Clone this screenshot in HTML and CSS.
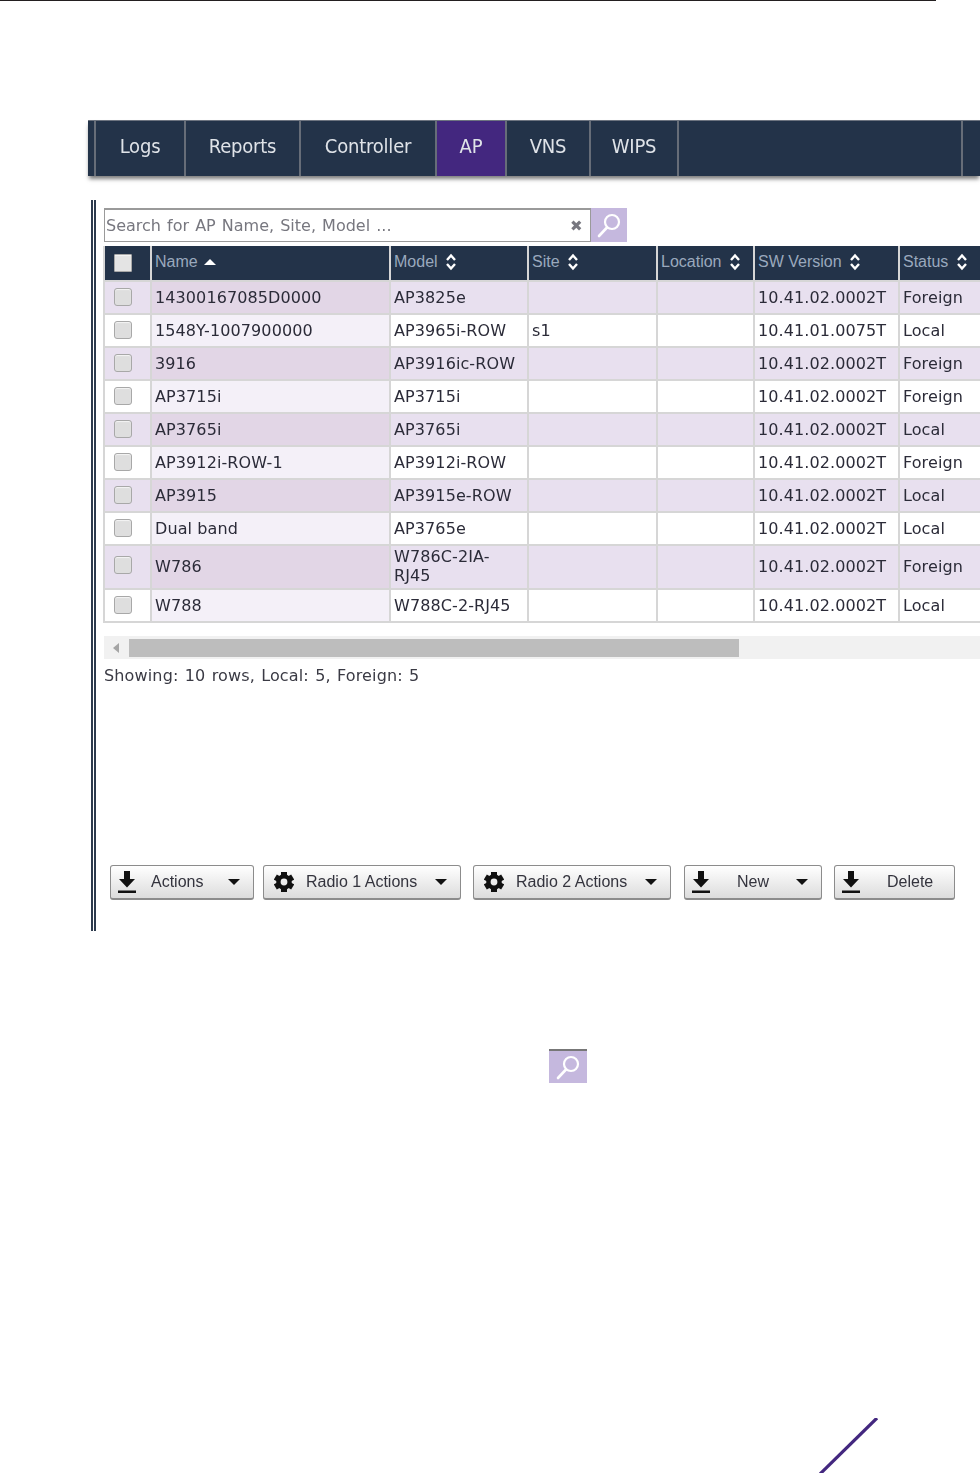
FILE: index.html
```html
<!DOCTYPE html>
<html lang="en">
<head>
<meta charset="utf-8">
<title>AP list</title>
<link rel="stylesheet" href="styles.css">
</head>
<body>
<svg width="0" height="0" class="defs" aria-hidden="true">
  <symbol id="i-search" viewBox="0 0 26 26"><circle cx="16" cy="10" r="7" fill="none" stroke="#fff" stroke-width="2.2"/><path d="M11 15.500 3 24" fill="none" stroke="#fff" stroke-width="2.6" stroke-linecap="round"/></symbol>
  <symbol id="i-sort" viewBox="0 0 12 18"><path d="M2 7 6 2.500 10 7M2 11l4 4.500 4-4.500" fill="none" stroke="#fff" stroke-width="2.400"/></symbol>
  <symbol id="i-down" viewBox="0 0 18 23"><path d="M6 0h6v8h5l-8 8.500L1 8h5z"/><rect y="19.500" width="18" height="2.500"/></symbol>
  <symbol id="i-gear" viewBox="0 0 20 20">
    <circle cx="10" cy="10" r="5.600" fill="none" stroke="#111" stroke-width="4.400"/>
    <rect x="7" y="0" width="6" height="5"/>
    <rect x="7" y="0" width="6" height="5" transform="rotate(60 10 10)"/>
    <rect x="7" y="0" width="6" height="5" transform="rotate(120 10 10)"/>
    <rect x="7" y="0" width="6" height="5" transform="rotate(180 10 10)"/>
    <rect x="7" y="0" width="6" height="5" transform="rotate(240 10 10)"/>
    <rect x="7" y="0" width="6" height="5" transform="rotate(300 10 10)"/>
  </symbol>
</svg>
<div class="page">
  <div class="topline"></div>
  <nav class="nav">
    <a class="tab t-logs">Logs</a>
    <a class="tab t-reports">Reports</a>
    <a class="tab t-controller">Controller</a>
    <a class="tab t-ap active">AP</a>
    <a class="tab t-vns">VNS</a>
    <a class="tab t-wips">WIPS</a>
    <span class="tab-fill"></span>
  </nav>
  <main class="panel">
    <div class="searchbar">
      <div class="searchbox">
        <input class="searchinput" type="text" placeholder="Search for AP Name, Site, Model ...">
        <span class="clear">✖</span>
      </div>
      <span class="searchbtn"><svg class="searchicon"><use href="#i-search"/></svg></span>
    </div>
    <table class="grid">
      <colgroup><col class="c0"><col class="c1"><col class="c2"><col class="c3"><col class="c4"><col class="c5"><col class="c6"></colgroup>
      <thead>
        <tr>
          <th class="chk"><span class="box headbox"></span></th>
          <th>Name <span class="asc"></span></th>
          <th>Model <svg class="sort"><use href="#i-sort"/></svg></th>
          <th>Site <svg class="sort"><use href="#i-sort"/></svg></th>
          <th>Location <svg class="sort"><use href="#i-sort"/></svg></th>
          <th>SW Version <svg class="sort"><use href="#i-sort"/></svg></th>
          <th>Status <svg class="sort"><use href="#i-sort"/></svg></th>
        </tr>
      </thead>
      <tbody>
        <tr><td class="chk"><span class="box"></span></td><td class="name">14300167085D0000</td><td>AP3825e</td><td></td><td></td><td>10.41.02.0002T</td><td>Foreign</td></tr>
        <tr><td class="chk"><span class="box"></span></td><td class="name">1548Y-1007900000</td><td>AP3965i-ROW</td><td>s1</td><td></td><td>10.41.01.0075T</td><td>Local</td></tr>
        <tr><td class="chk"><span class="box"></span></td><td class="name">3916</td><td>AP3916ic-ROW</td><td></td><td></td><td>10.41.02.0002T</td><td>Foreign</td></tr>
        <tr><td class="chk"><span class="box"></span></td><td class="name">AP3715i</td><td>AP3715i</td><td></td><td></td><td>10.41.02.0002T</td><td>Foreign</td></tr>
        <tr><td class="chk"><span class="box"></span></td><td class="name">AP3765i</td><td>AP3765i</td><td></td><td></td><td>10.41.02.0002T</td><td>Local</td></tr>
        <tr><td class="chk"><span class="box"></span></td><td class="name">AP3912i-ROW-1</td><td>AP3912i-ROW</td><td></td><td></td><td>10.41.02.0002T</td><td>Foreign</td></tr>
        <tr><td class="chk"><span class="box"></span></td><td class="name">AP3915</td><td>AP3915e-ROW</td><td></td><td></td><td>10.41.02.0002T</td><td>Local</td></tr>
        <tr><td class="chk"><span class="box"></span></td><td class="name">Dual band</td><td>AP3765e</td><td></td><td></td><td>10.41.02.0002T</td><td>Local</td></tr>
        <tr class="tall"><td class="chk"><span class="box"></span></td><td class="name">W786</td><td>W786C-2IA-RJ45</td><td></td><td></td><td>10.41.02.0002T</td><td>Foreign</td></tr>
        <tr><td class="chk"><span class="box"></span></td><td class="name">W788</td><td>W788C-2-RJ45</td><td></td><td></td><td>10.41.02.0002T</td><td>Local</td></tr>
      </tbody>
    </table>
    <div class="hscroll">
      <span class="arrow"></span>
      <span class="thumb"></span>
    </div>
    <p class="summary">Showing: 10 rows, Local: 5, Foreign: 5</p>
    <div class="actions">
      <button class="btn b-actions"><svg class="ico-down"><use href="#i-down"/></svg><span class="lbl l-actions">Actions</span><span class="caret"></span></button>
      <button class="btn b-radio"><svg class="ico-gear"><use href="#i-gear"/></svg><span class="lbl l-radio">Radio 1 Actions</span><span class="caret"></span></button>
      <button class="btn b-radio b-radio2"><svg class="ico-gear"><use href="#i-gear"/></svg><span class="lbl l-radio">Radio 2 Actions</span><span class="caret"></span></button>
      <button class="btn b-new"><svg class="ico-down"><use href="#i-down"/></svg><span class="lbl l-new">New</span><span class="caret"></span></button>
      <button class="btn b-delete"><svg class="ico-down"><use href="#i-down"/></svg><span class="lbl l-delete">Delete</span></button>
    </div>
  </main>
  <div class="note"><span class="searchbtn lone"><svg class="searchicon"><use href="#i-search"/></svg></span></div>
  <svg class="slash" viewBox="0 0 60 56" aria-hidden="true"><path d="M58 0 1 56" stroke="#43277f" stroke-width="3.200" fill="none"/></svg>
</div>
</body>
</html>
```
FILE: styles.css
```css
* { box-sizing: border-box; }
html, body { margin: 0; padding: 0; background: #fff; }
.defs { position: absolute; }
.page {
  position: relative;
  width: 980px;
  height: 1473px;
  overflow: hidden;
  font-family: "DejaVu Sans", sans-serif;
  font-size: 16px;
  color: #2b2b38;
  filter: blur(0.35px);
}
.topline { width: 936px; height: 1px; background: #231f20; }

.nav {
  display: flex;
  height: 56px;
  margin: 119px 0 0 88px;
  padding-left: 8px;
  background: #233349;
  border-top: 1px solid #6d7480;
  box-shadow: 0 4px 4px -1px #7c7c7c;
  font-family: "DejaVu Sans", sans-serif;
  font-stretch: condensed;
  font-size: 20px;
  letter-spacing: -0.2px;
  color: #dfe3e8;
}
.tab {
  display: flex;
  align-items: center;
  justify-content: center;
  padding-bottom: 6px;
  border-right: 2px solid #666d78;
}
.t-logs { width: 90px; box-shadow: -2px 0 0 #666d78; }
.t-reports { width: 115px; }
.t-controller { width: 136px; }
.t-ap { width: 70px; }
.t-vns { width: 84px; }
.t-wips { width: 88px; }
.active { background: #43277f; }
.tab-fill { width: 284px; border-right: 2px solid #666d78; }

.panel {
  display: flex;
  flex-direction: column;
  height: 731px;
  margin: 24px 0 0 91px;
  padding: 8px 0 31px 8px;
  border-left: 5px double #2d3a4d;
}
.searchbar { display: flex; height: 34px; }
.searchbox {
  display: flex;
  align-items: center;
  width: 487px;
  border: 1px solid #9a9a9a;
  border-top-width: 2px;
}
.searchinput {
  flex: 1;
  min-width: 0;
  height: 100%;
  padding: 0 0 0 1px;
  border: 0;
  outline: 0;
  background: transparent;
  font: 16px "DejaVu Sans", sans-serif;
  word-spacing: 1px;
  color: #2b2b38;
}
.searchinput::placeholder { color: #77777f; opacity: 1; }
.clear { width: 20px; font-size: 15px; color: #77777f; }
.searchbtn {
  display: flex;
  align-items: center;
  justify-content: center;
  width: 36px;
  height: 34px;
  background: #c5b8de;
}
.searchicon { width: 26px; height: 26px; }

.grid {
  width: 877px;
  margin: 4px 0 0 -1px;
  border-collapse: collapse;
  table-layout: fixed;
}
.c0 { width: 47px; }
.c1 { width: 239px; }
.c2 { width: 138px; }
.c3 { width: 129px; }
.c4 { width: 97px; }
.c5 { width: 145px; }
.c6 { width: 82px; }
.grid th, .grid td {
  padding: 0 3px;
  border: 2px solid #d6d6d6;
  text-align: left;
  vertical-align: middle;
  line-height: 19px;
}
.grid td { letter-spacing: 0.1px; }
.grid .tall td { padding-bottom: 2px; }
.grid thead tr { height: 35px; }
.grid th {
  padding-bottom: 3px;
  background: #233349;
  border-top: 0;
  font: 400 16px/19px "Liberation Sans", sans-serif;
  color: #9aa9bd;
  white-space: nowrap;
}
.grid tbody tr { height: 33px; background: #fff; }
.grid tbody tr.tall { height: 44px; }
.grid tbody tr:nth-child(odd) { background: #e8e0ef; }
.grid tbody tr:nth-child(even) .name { background: #f4f0f8; }
.grid tbody tr:nth-child(odd) .name { background: #e2d6e6; }
.grid .chk { padding: 0; text-align: center; }
.box {
  display: block;
  width: 18px;
  height: 18px;
  margin: -2px 0 0 9px;
  border: 1px solid #a8a8a8;
  border-radius: 3px;
  background: #dedede;
  box-shadow: inset 0 1px 1px #f4f4f4;
}
.headbox { border-radius: 1px; background: #e4e4e4; margin-top: 0; }
.sort { width: 12px; height: 18px; margin-left: 3px; vertical-align: -4px; }
.asc {
  display: inline-block;
  margin-left: 2px;
  vertical-align: 2px;
  border: 6px solid transparent;
  border-top: 0;
  border-bottom-color: #fff;
}

.hscroll {
  display: flex;
  align-items: center;
  width: 876px;
  height: 23px;
  margin-top: 13px;
  padding-left: 9px;
  background: #f1f1f1;
}
.arrow {
  width: 0;
  margin-right: 10px;
  border: 5px solid transparent;
  border-left: 0;
  border-right: 6px solid #a5a5a5;
}
.thumb { width: 610px; height: 18px; background: #bdbdbd; }
.summary { margin: 7px 0 0; line-height: 19px; word-spacing: 1px; letter-spacing: 0.15px; color: #3a3a44; }

.actions {
  display: flex;
  gap: 12px;
  margin-top: auto;
  padding-left: 6px;
}
.btn {
  display: flex;
  align-items: center;
  height: 35px;
  padding: 0 13px 0 7px;
  border: 1px solid #8c8c8c;
  border-bottom-width: 2px;
  border-radius: 3px;
  background: linear-gradient(#fff, #dcdcdc);
  font: 16px "Liberation Sans", sans-serif;
  color: #33333d;
}
.b-actions { width: 144px; margin-right: -3px; }
.b-radio { width: 198px; padding-left: 10px; }
.b-radio2 { margin-right: 1px; }
.b-new { width: 138px; }
.b-delete { width: 121px; }
.ico-down { width: 18px; height: 23px; fill: #111; }
.ico-gear { width: 20px; height: 20px; fill: #111; }
.l-actions { margin-left: 15px; }
.l-radio { margin-left: 12px; }
.l-new { margin-left: 27px; }
.l-delete { margin-left: 27px; }
.caret {
  margin-left: auto;
  border: 6px solid transparent;
  border-bottom: 0;
  border-top-color: #111;
}

.note { margin: 118px 0 0 549px; }
.lone { width: 38px; border-top: 2px solid #777; }
.slash { position: absolute; left: 819px; top: 1418px; width: 60px; height: 56px; }
```
